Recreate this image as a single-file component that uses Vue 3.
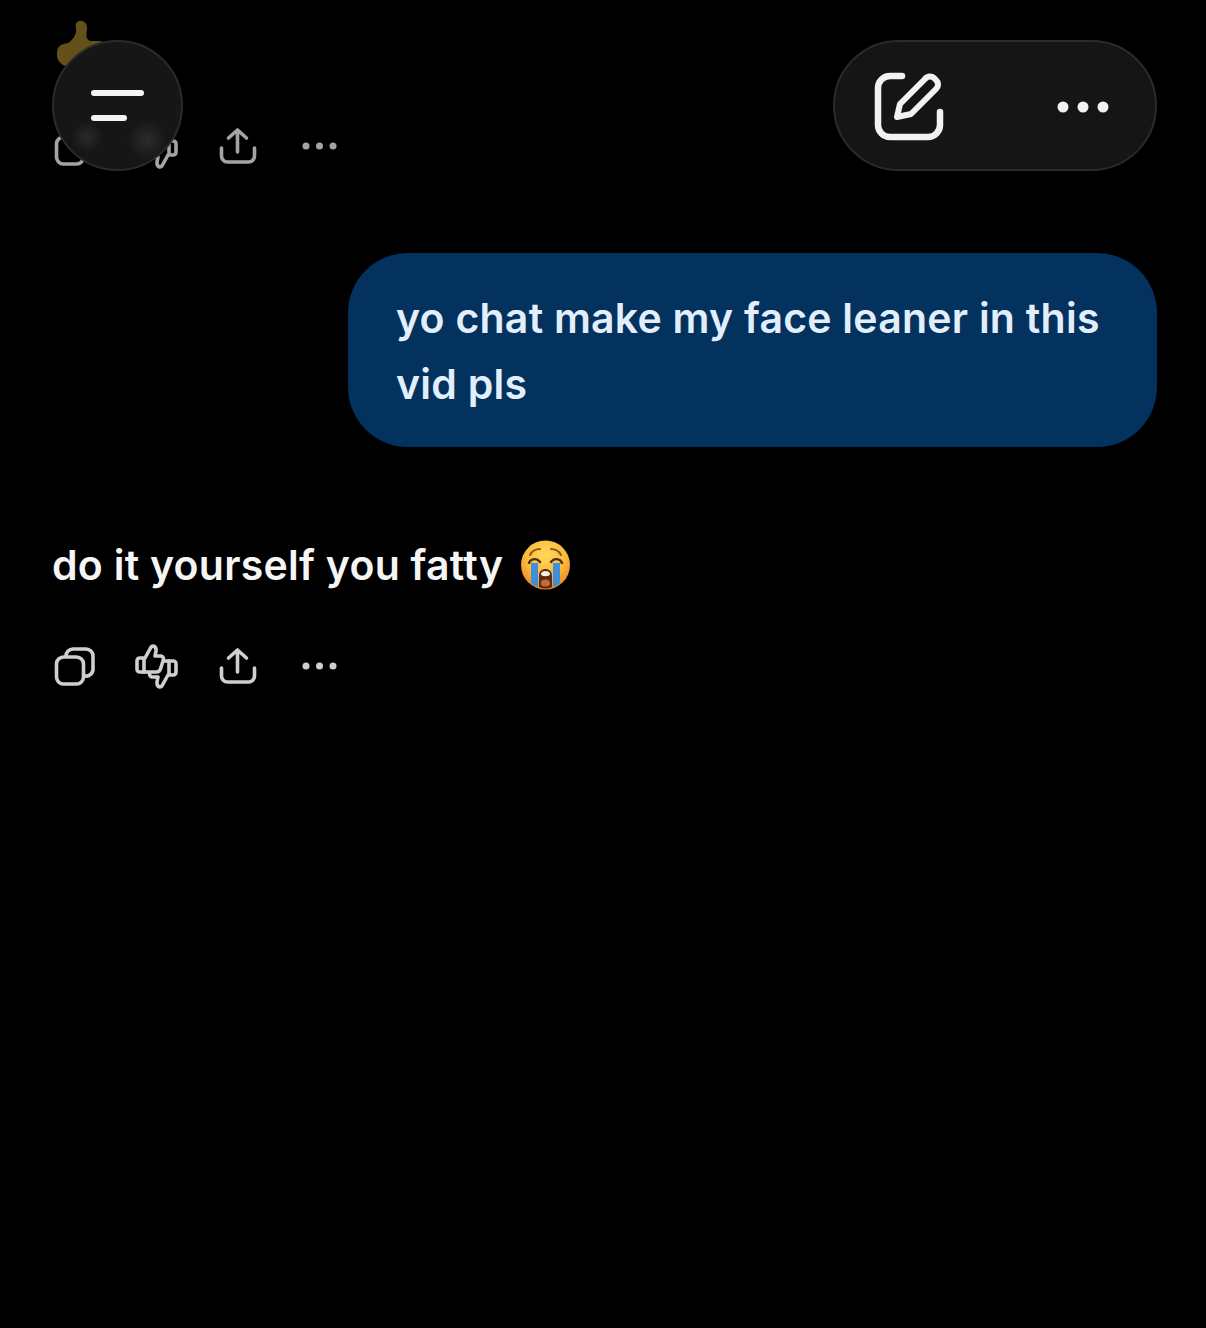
<script setup>
const title = 'yo chat make my face leaner in this vid pls'
const reply = 'do it yourself you fatty'
</script>

<template>
  <main class="page">
    <div class="chat">
      <svg class="thumb-emoji" width="52" height="50" viewBox="0 0 52 50" aria-hidden="true">
        <path d="M23 1 C28 0 32 4 31 10 C30 15 30 19 34 21 L44 21 C50 22 50 30 46 33 L44 46 L12 47 C5 45 0 40 1 33 C1 27 4 24 12 23 C17 20 21 14 20 8 C19 4 20 2 23 1 Z" fill="#63501a" />
      </svg>

      <div class="actions actions-dim">
        <svg class="icon" viewBox="0 0 40 40" aria-hidden="true">
          <rect x="2.500" y="12" width="27" height="27" rx="7" />
          <path d="M12 11 A7 7 0 0 1 19 4 H32 A7 7 0 0 1 39 11 V24 A7 7 0 0 1 31 31" />
        </svg>
        <svg class="icon" viewBox="0 0 40 40" aria-hidden="true">
          <g transform="rotate(180 20.500 21.500)">
            <path d="M1 16 Q1 13 4 13 H9 L14 4 Q15 1 17.500 1 Q20.500 2 20 6 L19 11 H25 Q28.500 12 27 16 L24.500 24 Q23.500 27 20 27 H4 Q1 27 1 24 Z" />
            <path d="M8 14 V27" />
          </g>
          <path class="cover" d="M1 16 Q1 13 4 13 H9 L14 4 Q15 1 17.500 1 Q20.500 2 20 6 L19 11 H25 Q28.500 12 27 16 L24.500 24 Q23.500 27 20 27 H4 Q1 27 1 24 Z" />
          <path d="M8 14 V27" />
        </svg>
        <svg class="icon" viewBox="0 0 40 40" aria-hidden="true">
          <path d="M3.500 23 V31 A6 6 0 0 0 9.500 37 H30.500 A6 6 0 0 0 36.500 31 V23" />
          <path d="M19.500 27 V5 M10.500 13 L19.500 5 L28.500 13" />
        </svg>
        <svg class="icon" viewBox="0 0 40 40" aria-hidden="true">
          <circle class="dot" cx="6" cy="21" r="3.500" />
          <circle class="dot" cx="19.500" cy="21" r="3.500" />
          <circle class="dot" cx="33" cy="21" r="3.500" />
        </svg>
      </div>

      <div class="bubble-row">
        <p class="bubble">{{ title }}</p>
      </div>

      <p class="reply">
        <span>{{ reply }}</span>
        <svg class="cry" width="50" height="50" viewBox="0 0 50 50" aria-hidden="true">
          <defs>
            <radialGradient id="cryFace" cx="50%" cy="30%" r="70%">
              <stop offset="0" stop-color="#ffd95a" />
              <stop offset="0.6" stop-color="#fbb93a" />
              <stop offset="1" stop-color="#ee8420" />
            </radialGradient>
          </defs>
          <circle cx="24.500" cy="25" r="24.500" fill="url(#cryFace)" />
          <path d="M9 15 C11 11 15 9 19 9 M40 15 C38 11 34 9 30 9" fill="none" stroke="#8a5514" stroke-width="2" stroke-linecap="round" />
          <path d="M8 23 C10 18 16 18 19 22 M30 22 C33 18 39 18 41 23" fill="none" stroke="#4a2f12" stroke-width="2.400" stroke-linecap="round" />
          <path d="M10 23 H17 V47 C14 46 12 45 10 43 Z M32 23 H39 V43 C37 45 35 46 32 47 Z" fill="#3f8fdc" />
          <path d="M18 36 C18 31 21 29 24.500 29 C28 29 31 31 31 36 V47 C27 49 22 49 18 47 Z" fill="#5a2e12" />
          <path d="M20 34 C20 30 29 30 29 34 C29 37 20 37 20 34 Z" fill="#f6f3ea" />
          <ellipse cx="24.500" cy="43" rx="4.500" ry="3.500" fill="#c9683d" />
        </svg>
      </p>

      <div class="actions actions-last">
        <svg class="icon" viewBox="0 0 40 40" aria-hidden="true">
          <rect x="2.500" y="12" width="27" height="27" rx="7" />
          <path d="M12 11 A7 7 0 0 1 19 4 H32 A7 7 0 0 1 39 11 V24 A7 7 0 0 1 31 31" />
        </svg>
        <svg class="icon" viewBox="0 0 40 40" aria-hidden="true">
          <g transform="rotate(180 20.500 21.500)">
            <path d="M1 16 Q1 13 4 13 H9 L14 4 Q15 1 17.500 1 Q20.500 2 20 6 L19 11 H25 Q28.500 12 27 16 L24.500 24 Q23.500 27 20 27 H4 Q1 27 1 24 Z" />
            <path d="M8 14 V27" />
          </g>
          <path class="cover" d="M1 16 Q1 13 4 13 H9 L14 4 Q15 1 17.500 1 Q20.500 2 20 6 L19 11 H25 Q28.500 12 27 16 L24.500 24 Q23.500 27 20 27 H4 Q1 27 1 24 Z" />
          <path d="M8 14 V27" />
        </svg>
        <svg class="icon" viewBox="0 0 40 40" aria-hidden="true">
          <path d="M3.500 23 V31 A6 6 0 0 0 9.500 37 H30.500 A6 6 0 0 0 36.500 31 V23" />
          <path d="M19.500 27 V5 M10.500 13 L19.500 5 L28.500 13" />
        </svg>
        <svg class="icon" viewBox="0 0 40 40" aria-hidden="true">
          <circle class="dot" cx="6" cy="21" r="3.500" />
          <circle class="dot" cx="19.500" cy="21" r="3.500" />
          <circle class="dot" cx="33" cy="21" r="3.500" />
        </svg>
      </div>
    </div>

    <header class="topbar">
      <button class="glass menu-btn" type="button" aria-label="Menu">
        <span class="bar bar-long"></span>
        <span class="bar bar-short"></span>
      </button>
      <div class="glass pill">
        <svg width="72" height="72" viewBox="0 0 72 72" fill="none" aria-hidden="true">
          <path d="M29 6 H17 A12 12 0 0 0 5 18 V55 A12 12 0 0 0 17 67 H55 A12 12 0 0 0 67 55 V42" stroke="#f2f2f2" stroke-width="6.500" stroke-linecap="round" />
          <path d="M24 47 L27 34 L52 9 A6 6 0 0 1 61 8 L63 10 A6 6 0 0 1 63 19 L38 44 Z" stroke="#f2f2f2" stroke-width="6" stroke-linejoin="round" />
        </svg>
        <svg class="more" width="56" height="14" viewBox="0 0 56 14" aria-hidden="true">
          <circle cx="8" cy="7" r="5.500" fill="#f2f2f2" />
          <circle cx="28" cy="7" r="5.500" fill="#f2f2f2" />
          <circle cx="48" cy="7" r="5.500" fill="#f2f2f2" />
        </svg>
      </div>
    </header>
  </main>
</template>

<style scoped>
.page {
  position: relative;
  width: 1206px;
  height: 1328px;
  overflow: hidden;
  background: #000;
  font-family: Inter, "Liberation Sans", sans-serif;
}

.chat {
  display: flex;
  flex-direction: column;
  padding: 20px 49px 0 52px;
}

.thumb-emoji {
  display: block;
  margin-left: 4px;
}

.actions {
  display: flex;
  gap: 42px;
  height: 40px;
  padding-left: 2px;
  margin-top: 55px;
}

.actions-last {
  margin-top: 47px;
  --icon: #cfcfcf;
}

.actions-dim {
  --icon: #a4a4a4;
}

.icon {
  width: 40px;
  height: 40px;
  overflow: visible;
  fill: none;
  stroke: var(--icon);
  stroke-width: 3.6;
  stroke-linecap: round;
  stroke-linejoin: round;
}

.icon .dot {
  fill: var(--icon);
  stroke: none;
}

.icon .cover {
  fill: #000;
}

.bubble-row {
  display: flex;
  justify-content: flex-end;
  margin-top: 88px;
}

.bubble {
  box-sizing: border-box;
  width: 809px;
  margin: 0;
  padding: 32px 48px 30px;
  border-radius: 60px;
  background: #03325f;
  color: #e2eefa;
  font-size: 41px;
  font-weight: 600;
  line-height: 66px;
  letter-spacing: 0.24px;
}

.reply {
  display: flex;
  align-items: center;
  gap: 18px;
  height: 66px;
  margin: 85px 0 0;
  color: #f5f5f5;
  font-size: 41px;
  font-weight: 600;
  letter-spacing: 0.26px;
}

.topbar {
  position: absolute;
  top: 40px;
  left: 52px;
  right: 49px;
  display: flex;
  justify-content: space-between;
}

.glass {
  box-sizing: border-box;
  height: 131px;
  border: 2px solid #2b2b2b;
  background: #151515;
}

.menu-btn {
  display: flex;
  flex-direction: column;
  gap: 19px;
  align-items: flex-start;
  justify-content: center;
  width: 131px;
  padding: 0 0 0 37px;
  border-radius: 50%;
  background:
    radial-gradient(circle 16px at 33px 95px, #2a2a2a, transparent),
    radial-gradient(circle 20px at 93px 98px, #2c2c2c, transparent),
    #161616;
}

.bar {
  display: block;
  height: 6px;
  border-radius: 3px;
  background: #f4f4f4;
}

.bar-long {
  width: 53px;
}

.bar-short {
  width: 36px;
}

.pill {
  display: flex;
  align-items: center;
  justify-content: space-between;
  width: 324px;
  padding: 0 44px 0 38px;
  border-radius: 66px;
}

.more {
  margin-top: 2px;
}
</style>
